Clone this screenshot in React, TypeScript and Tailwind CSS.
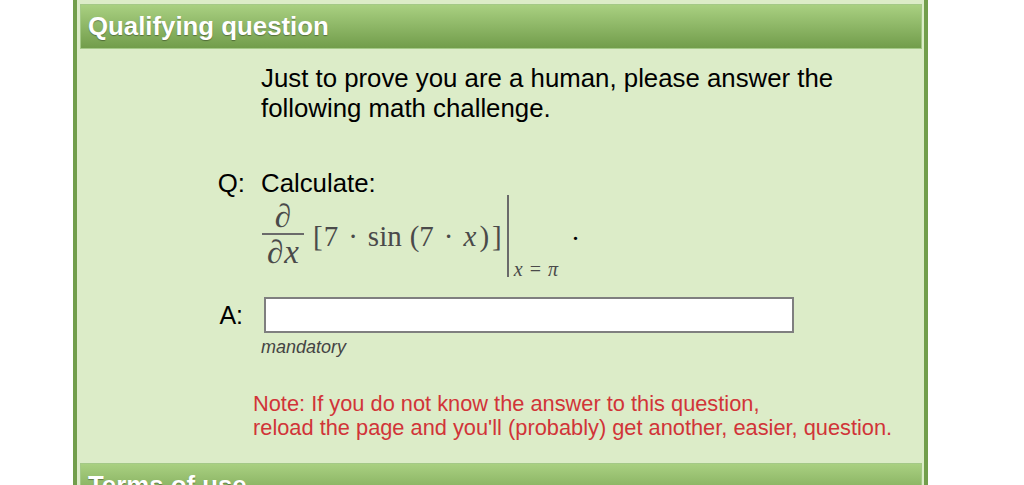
import React from "react";

const sans = { fontFamily: "'Liberation Sans', Arial, Helvetica, sans-serif" };
const serif = { fontFamily: "'Liberation Serif', 'Times New Roman', serif" };

function Header({ title }: { title: string }) {
  return (
    <div className="h-[45px] flex items-center pl-[7px] bg-linear-to-b from-[#a9d081] to-[#729d4b] border border-[#a4c987]">
      <span className="text-white font-bold text-[25.8px] leading-none [text-shadow:0_1px_1px_rgba(0,0,0,0.35)]">
        {title}
      </span>
    </div>
  );
}

export default function App() {
  return (
    <div className="w-[1024px] h-[485px] overflow-hidden bg-white" style={sans}>
      <div className="ml-[73px] w-[855px] h-[485px] border-x-4 border-[#729e4c] bg-[#dcecc8] pt-[4px] pl-[3px] pr-[2px]">
        <Header title="Qualifying question" />
        <div className="-ml-[3px]">
          <p className="mt-[14px] pl-[184px] text-[25.8px] leading-[30px] text-black">
            Just to prove you are a human, please answer the
            <br />
            following math challenge.
          </p>

          <div className="mt-[45px] flex">
            <div className="w-[168px] text-right text-[25.8px] leading-[30px] text-black">Q:</div>
            <div className="ml-[16px]">
              <div className="text-[25.8px] leading-[30px] text-black">Calculate:</div>
              <div className="-mt-[3px] h-[82px] flex items-center text-[#4a4a4a]" style={serif}>
                <div className="ml-[1px] w-[42px] flex flex-col items-center -mt-[4px]">
                  <span className="italic text-[33px] leading-[34px]">∂</span>
                  <div className="h-[2px] w-full bg-[#6a6a6a]" />
                  <span className="italic text-[33px] leading-[34px]">
                    ∂<span className="ml-[1px]">x</span>
                  </span>
                </div>
                <div className="ml-[9px] flex items-center text-[29px] leading-[30px]">
                  <span>[</span>
                  <span className="ml-[1px]">7</span>
                  <span className="mx-[10px]">·</span>
                  <span>sin</span>
                  <span className="ml-[8px]">(</span>
                  <span>7</span>
                  <span className="mx-[10px]">·</span>
                  <span className="italic">x</span>
                  <span className="ml-[3px]">)</span>
                  <span className="ml-[3px]">]</span>
                </div>
                <div className="ml-[5px] self-stretch w-[2px] bg-[#6a6a6a]" />
                <div className="self-end ml-[5px] -mb-[1px] italic text-[20px] leading-[18px]">
                  x<span className="not-italic mx-[7px]">=</span>π
                </div>
                <div className="ml-[14px] text-[28px] leading-[30px] -mt-[10px] text-black">.</div>
              </div>
            </div>
          </div>

          <div className="mt-[20px] flex items-center">
            <div className="w-[166px] text-right text-[25px] leading-[30px] text-black">A:</div>
            <div className="ml-[18px]">
              <input
                type="text"
                className="ml-[3px] block w-[530px] h-[36px] bg-white border-2 border-[#7f7f7f] outline-none"
              />
            </div>
          </div>
          <div className="mt-[4px] pl-[184px] italic text-[18px] leading-[21px] text-[#444444]">mandatory</div>

          <p className="mt-[34px] pl-[176px] text-[21.8px] leading-[24px] text-[#d13438]">
            Note: If you do not know the answer to this question,
            <br />
            reload the page and you'll (probably) get another, easier, question.
          </p>
        </div>
        <div className="mt-[23px]">
          <Header title="Terms of use" />
        </div>
      </div>
    </div>
  );
}
